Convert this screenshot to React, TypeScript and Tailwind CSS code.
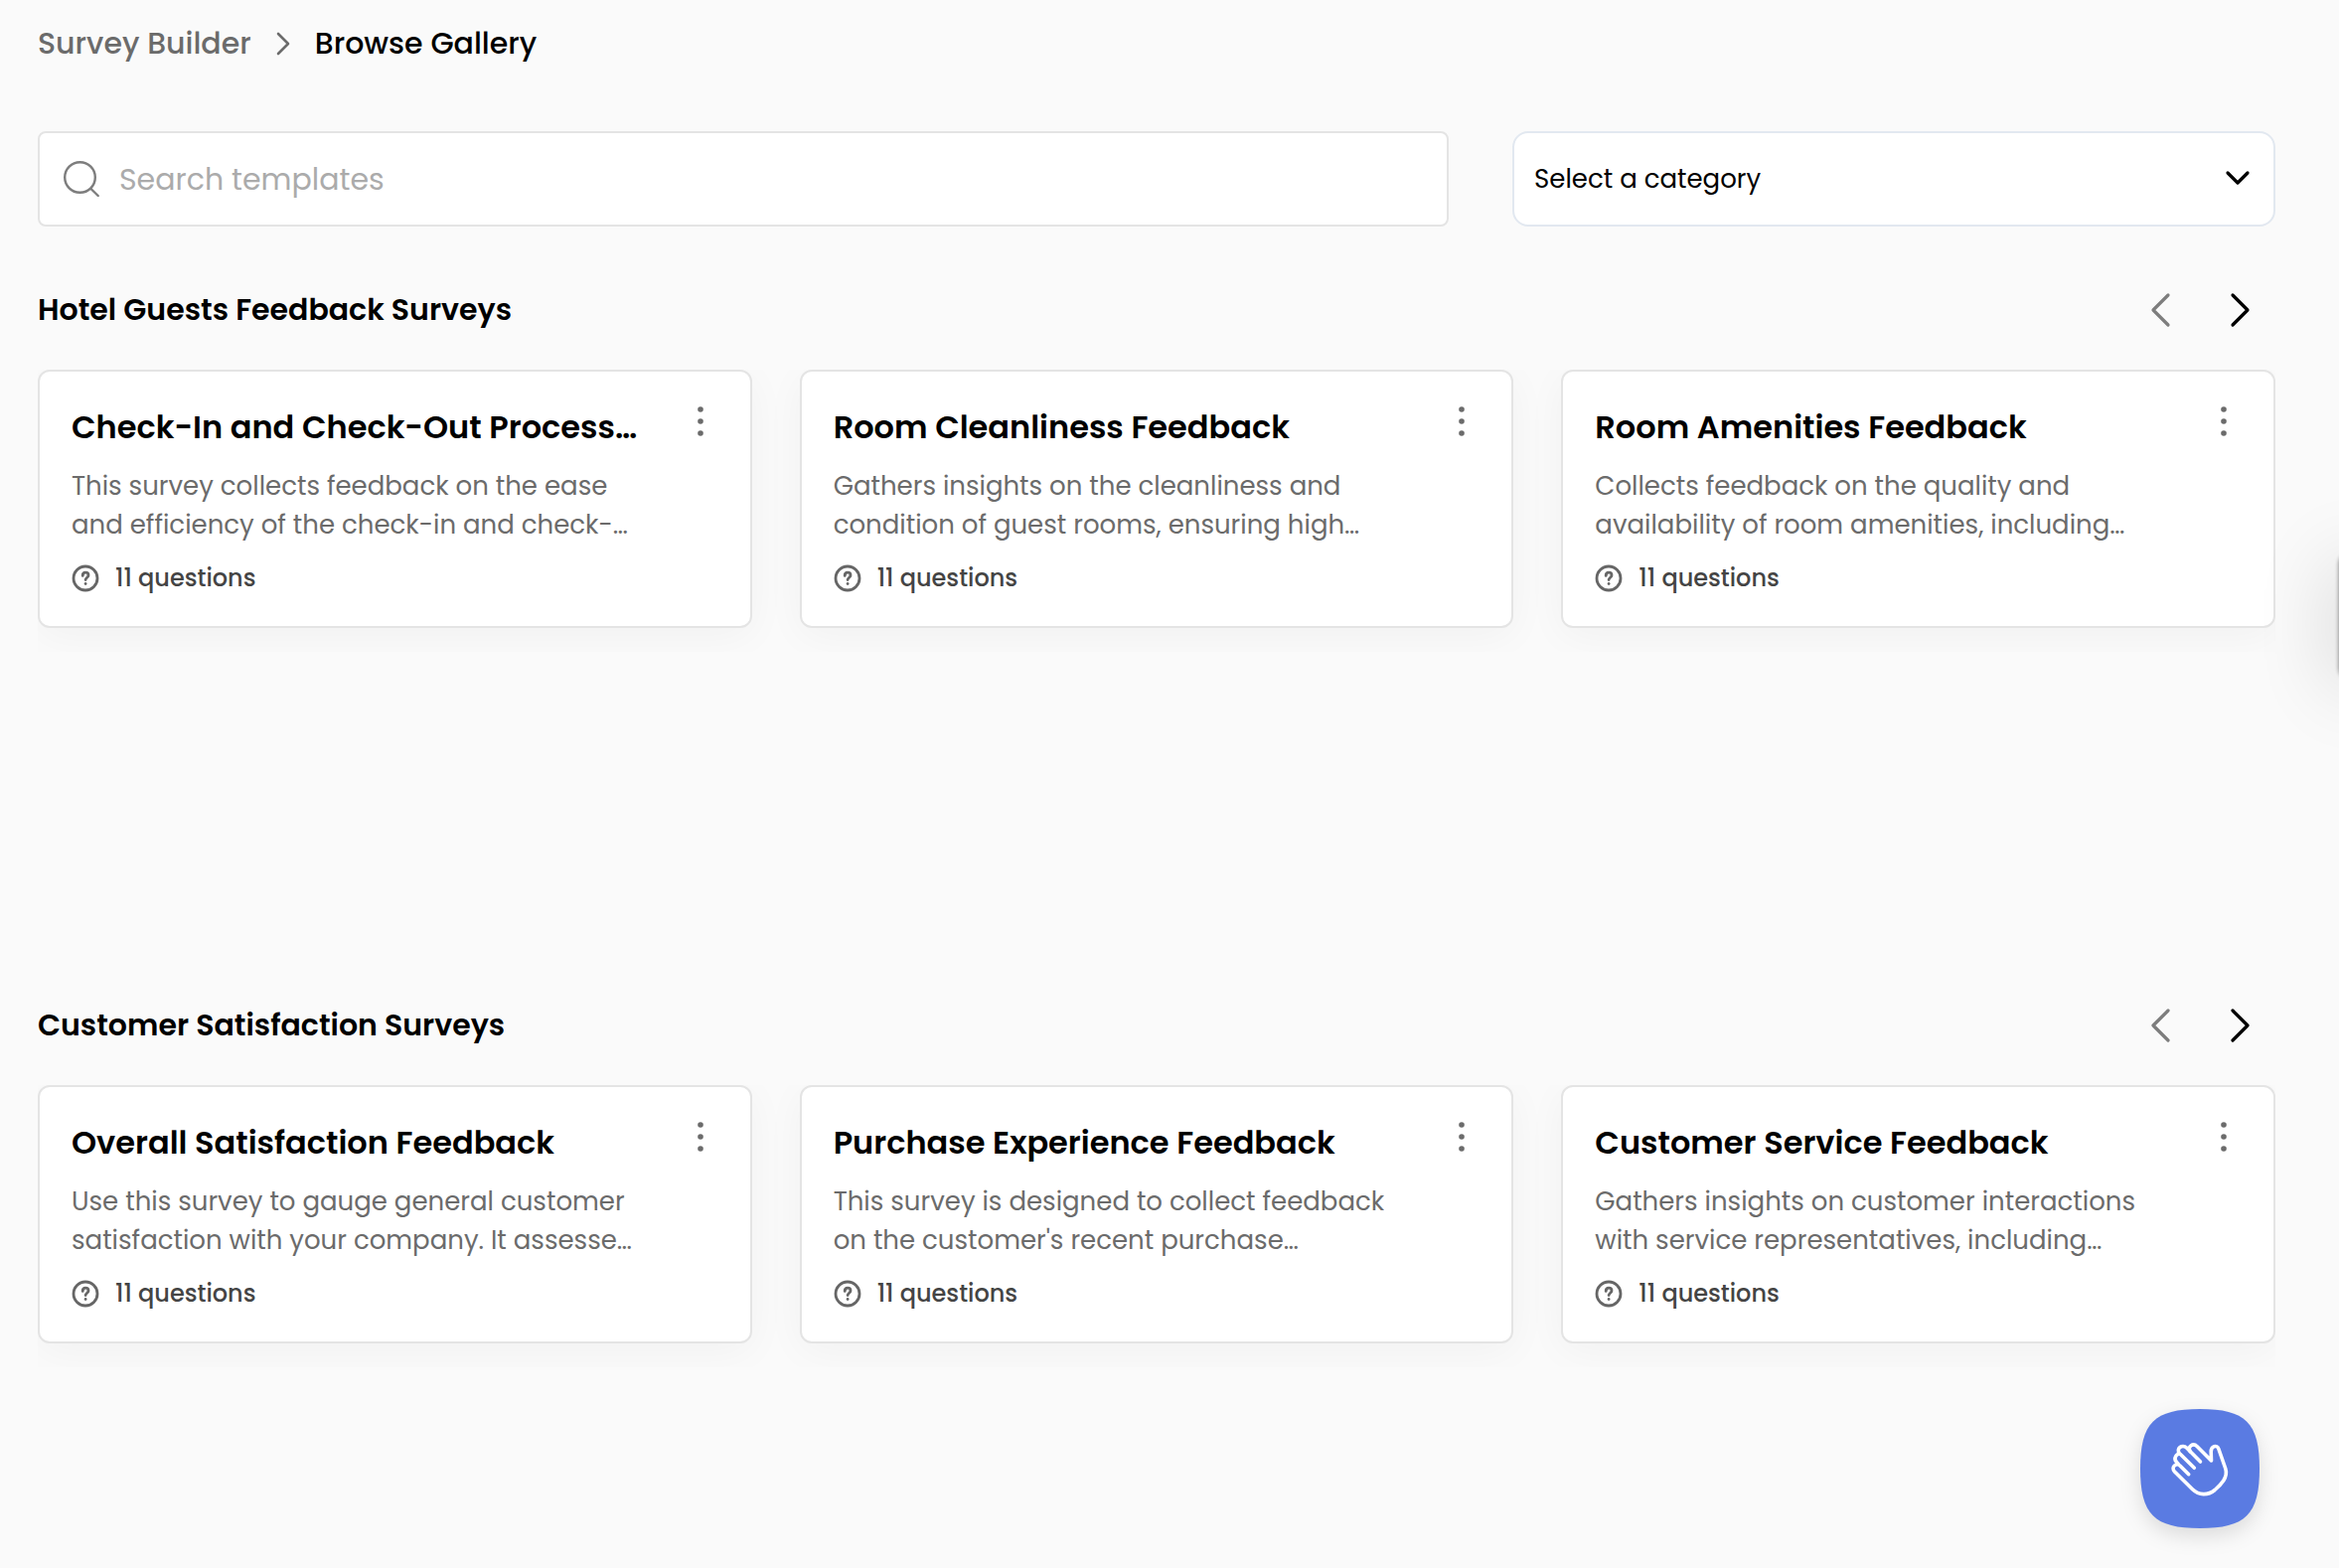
import type { ReactNode } from 'react';

type Survey = { title: string; lines: [string, string]; questions: number };
type Group = { name: string; surveys: Survey[] };

const groups: Group[] = [
    {
        name: 'Hotel Guests Feedback Surveys',
        surveys: [
            {
                title: 'Check-In and Check-Out Process…',
                lines: ['This survey collects feedback on the ease', 'and efficiency of the check-in and check-…'],
                questions: 11,
            },
            {
                title: 'Room Cleanliness Feedback',
                lines: ['Gathers insights on the cleanliness and', 'condition of guest rooms, ensuring high…'],
                questions: 11,
            },
            {
                title: 'Room Amenities Feedback',
                lines: ['Collects feedback on the quality and', 'availability of room amenities, including…'],
                questions: 11,
            },
        ],
    },
    {
        name: 'Customer Satisfaction Surveys',
        surveys: [
            {
                title: 'Overall Satisfaction Feedback',
                lines: ['Use this survey to gauge general customer', 'satisfaction with your company. It assesse…'],
                questions: 11,
            },
            {
                title: 'Purchase Experience Feedback',
                lines: ['This survey is designed to collect feedback', "on the customer's recent purchase…"],
                questions: 11,
            },
            {
                title: 'Customer Service Feedback',
                lines: ['Gathers insights on customer interactions', 'with service representatives, including…'],
                questions: 11,
            },
        ],
    },
];

function Stroke({ d, className, width = 3.2 }: { d: string; className: string; width?: number }) {
    return (
        <svg viewBox="0 0 40 40" className={className} fill="none" stroke="currentColor" strokeWidth={width} strokeLinecap="round" strokeLinejoin="round" aria-hidden="true">
            <path d={d} />
        </svg>
    );
}

function NavButton({ label, disabled, children }: { label: string; disabled?: boolean; children: ReactNode }) {
    return (
        <button type="button" aria-label={label} disabled={disabled} className="flex size-10 items-center justify-center text-black disabled:text-[#7d7d7d]">
            {children}
        </button>
    );
}

function SurveyCard({ survey }: { survey: Survey }) {
    return (
        <article className="flex items-start justify-between rounded-xl border-2 border-[#e4e4e4] bg-white px-8 pt-8 pb-[30px] shadow-[0_8px_40px_rgba(0,0,0,0.04)]">
            <div className="min-w-0">
                <h3 className="truncate text-[32px] leading-12 font-semibold text-black">{survey.title}</h3>
                <p className="mt-4 text-[26px] leading-[39px] text-[#6b6b6b]">
                    <span className="block truncate">{survey.lines[0]}</span>
                    <span className="block truncate">{survey.lines[1]}</span>
                </p>
                <div className="mt-4 flex items-center gap-4 text-[24px] leading-9 font-medium text-[#444]">
                    <svg viewBox="0 0 28 28" className="size-7 text-[#666]" fill="none" stroke="currentColor" strokeWidth="2.8" strokeLinecap="round" aria-hidden="true">
                        <circle cx="14" cy="14" r="12" />
                        <path d="M11.2 11.400c0-2 1.200-3.200 2.900-3.200s2.900 1.100 2.900 2.800c0 2.200-2.900 2.300-2.900 4.600" />
                        <path d="M14.1 19.500v.1" />
                    </svg>
                    {survey.questions} questions
                </div>
            </div>
            <button type="button" aria-label={`Options for ${survey.title}`} className="flex w-9 shrink-0 justify-center text-[#6b6b6b]">
                <svg viewBox="0 0 36 36" className="size-9" fill="currentColor" aria-hidden="true">
                    <circle cx="18" cy="6" r="2.8" />
                    <circle cx="18" cy="18" r="2.8" />
                    <circle cx="18" cy="30" r="2.8" />
                </svg>
            </button>
        </article>
    );
}

function WaveButton() {
    return (
        <button type="button" aria-label="Open help" className="fixed right-20 bottom-10 size-[120px] drop-shadow-[0_8px_10px_rgba(0,0,0,0.12)]">
            <svg viewBox="0 0 120 120" className="size-full" aria-hidden="true">
                <path d="M0 60C0 14 14 0 60 0s60 14 60 60-14 60-60 60S0 106 0 60z" fill="#5a7be2" />
                <g fill="none" stroke="#fff" strokeWidth="3.6" strokeLinecap="round" strokeLinejoin="round">
                    <path d="M48.7 65.7L40.200 57.200C36.500 53.500 30.300 58.500 34.500 63L52.500 80.800C59 87 68 87.200 75 81.500C78.500 78.500 81.500 75.500 83.800 72C86.300 68 87.200 64.500 85.800 60L78.800 40C77.300 35.500 71.200 37.200 71.200 43L71.500 52L57.300 37.800C53 33.500 47 38 50.200 42.700" />
                    <path d="M60.500 53L46.600 39.100C42.300 34.800 35.500 40 39.500 44.800" />
                    <path d="M54.300 59.300L40.400 45.400C36.500 44.500 33 49.500 36.400 53.200L38 55" />
                </g>
            </svg>
        </button>
    );
}

export default function App() {
    return (
        <main className="min-h-screen overflow-x-hidden bg-[#fafafa] pr-16 pl-[38px] font-['Poppins','Inter',sans-serif]">
            {/* Breadcrumb */}
            <nav aria-label="Breadcrumb" className="flex h-[132px] items-start pt-5 text-[30px] leading-12 font-medium">
                <a href="#builder" className="text-[#6b6b6b]">Survey Builder</a>
                <Stroke d="M15 10l10 10-10 10" width={2.6} className="mx-3 mt-1 size-10 text-[#6b6b6b]" />
                <a href="#gallery" aria-current="page" className="text-black">Browse Gallery</a>
            </nav>

            {/* Filters */}
            <div className="flex gap-16">
                <label className="flex h-24 flex-1 items-center gap-5 rounded-lg border-2 border-[#e4e4e4] bg-white px-6">
                    <svg viewBox="0 0 36 36" className="size-9 text-[#7d7d7d]" fill="none" stroke="currentColor" strokeWidth="2.4" strokeLinecap="round" aria-hidden="true">
                        <circle cx="16.5" cy="16.5" r="15.3" />
                        <path d="M27.500 28l7.200 7" />
                    </svg>
                    <input type="text" aria-label="Search templates" placeholder="Search templates" className="min-w-0 flex-1 text-[30px] text-black outline-none placeholder:text-[#ababab]" />
                </label>
                <div className="relative w-[34.1%]">
                    <select aria-label="Category" className="h-24 w-full appearance-none rounded-2xl border-2 border-[#e2e8f0] bg-white px-5 text-[26px] text-black">
                        <option>Select a category</option>
                    </select>
                    <Stroke d="M8 14l10 10 10-10" className="pointer-events-none absolute top-7 right-4 size-10" />
                </div>
            </div>

            {/* Survey groups */}
            <div className="flex flex-col gap-[340px] pt-12">
                {groups.map((group) => (
                    <section key={group.name}>
                        <div className="flex h-24 items-start justify-between pt-3">
                            <h2 className="text-[30px] leading-12 font-semibold text-black">{group.name}</h2>
                            <div className="flex gap-10 pt-1 pr-4">
                                <NavButton label="Previous" disabled>
                                    <Stroke d="M28 5L13 20l15 15" className="size-10" />
                                </NavButton>
                                <NavButton label="Next">
                                    <Stroke d="M13 5l15 15-15 15" className="size-10" />
                                </NavButton>
                            </div>
                        </div>
                        <div className="grid grid-cols-3 gap-12 overflow-hidden pb-6">
                            {group.surveys.map((survey) => (
                                <SurveyCard key={survey.title} survey={survey} />
                            ))}
                        </div>
                    </section>
                ))}
            </div>

            {/* Collapsed side tab, only its shadow shows */}
            <div className="fixed top-[556px] -right-10 h-[128px] w-10 rounded-xl shadow-[0_0_4px_rgba(0,0,0,0.5),0_8px_80px_rgba(0,0,0,0.2)]" />
            <WaveButton />
        </main>
    );
}
